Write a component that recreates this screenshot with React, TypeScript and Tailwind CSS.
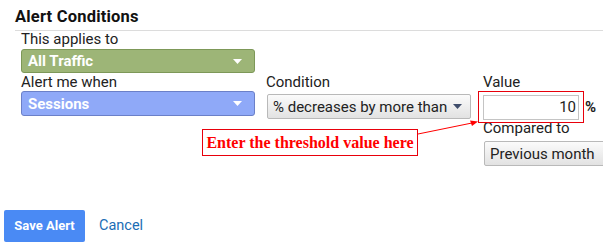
import React from 'react';

const Caret = ({ color }: { color: string }) => (
  <svg width="9" height="5" viewBox="0 0 9 5" className="shrink-0">
    <polygon points="0,0 9,0 4.5,5" fill={color} />
  </svg>
);

const ColorSelect = ({ label, tone }: { label: string; tone: 'green' | 'blue' }) => {
  const styles =
    tone === 'green'
      ? 'bg-[#9db577] border-[#7d9858] h-[24px]'
      : 'bg-[#8fa9f8] border-[#6b80c8] h-[25px]';
  return (
    <div
      className={`flex w-[234px] items-center justify-between rounded-[3px] border pl-[6px] pr-[12px] ${styles}`}
    >
      <span className="text-[15px] font-bold leading-[18px] text-white">{label}</span>
      <Caret color="#ffffff" />
    </div>
  );
};

const GraySelect = ({ label, width, caret = true }: { label: string; width: string; caret?: boolean }) => (
  <div
    className={`flex h-[25px] items-center justify-between rounded-[2px] border border-[#b9b9b9] bg-linear-to-b from-[#fbfbfb] to-[#e2e2e2] pl-[5px] pr-[8px] ${width}`}
  >
    <span className="whitespace-nowrap text-[15px] leading-[18px] text-[#222]">{label}</span>
    {caret && <Caret color="#3f4d6b" />}
  </div>
);

export default function App() {
  return (
    <div className="relative h-[249px] w-[603px] overflow-hidden bg-white font-['Roboto',sans-serif] text-[#222]">
      {/* Header */}
      <h2 className="pl-[15px] pt-[8px] text-[16.5px] font-bold leading-[18px] tracking-[0.2px] text-[#111]">
        Alert Conditions
      </h2>
      <div className="ml-[15px] mt-[4px] border-t border-[#dcdcdc]" />

      {/* Conditions */}
      <div className="pl-[21px]">
        <div className="text-[15px] leading-[17px]">This applies to</div>
        <div className="mt-[1px]">
          <ColorSelect label="All Traffic" tone="green" />
        </div>

        <div className="flex">
          <div className="w-[245px] shrink-0">
            <div className="mt-[1px] text-[15px] leading-[17px]">Alert me when</div>
            <ColorSelect label="Sessions" tone="blue" />
          </div>

          <div className="w-[217px] shrink-0">
            <div className="mt-[1px] text-[15px] leading-[17px]">Condition</div>
            <div className="ml-[1px] mt-[3px]">
              <GraySelect label="% decreases by more than" width="w-[204px]" />
            </div>
          </div>

          <div className="shrink-0">
            <div className="mt-[1px] text-[15px] leading-[17px]">Value</div>
            <div className="mt-[4px] flex items-center">
              <div className="flex h-[25px] w-[96px] items-center justify-end border border-[#c4c4c4] bg-white pr-[2px] text-[15px]">
                10
              </div>
              <span className="ml-[6px] text-[15px] font-bold">%</span>
            </div>
            <div className="mt-0 text-[15px] leading-[17px]">Compared to</div>
            <div className="ml-[1px] mt-[4px]">
              <GraySelect label="Previous month" width="w-[130px]" caret={false} />
            </div>
          </div>
        </div>
      </div>

      {/* Actions */}
      <div className="ml-[4px] mt-[44px] flex items-center">
        <button className="h-[32px] w-[81px] rounded-[2px] bg-[#4a8af4] text-[13px] font-bold text-white">
          Save Alert
        </button>
        <span className="ml-[14px] text-[14.5px] text-[#1b6db5]">Cancel</span>
      </div>

      {/* Annotation overlay */}
      <div className="pointer-events-none absolute left-[478px] top-[91px] h-[32px] w-[106px] border border-[#e8000b]" />
      <div className="absolute left-[202px] top-[129px] flex h-[27px] w-[216px] items-center justify-center border border-[#e8000b] bg-white">
        <span className="font-['Liberation_Serif',serif] text-[16px] font-bold text-[#f00]">
          Enter the threshold value here
        </span>
      </div>
      <svg className="pointer-events-none absolute left-0 top-0" width="603" height="249">
        <line x1="418" y1="134" x2="472" y2="123" stroke="#f00" strokeWidth="1" />
        <polygon points="478,121.5 470,120.5 472,126" fill="#f00" />
      </svg>
    </div>
  );
}
